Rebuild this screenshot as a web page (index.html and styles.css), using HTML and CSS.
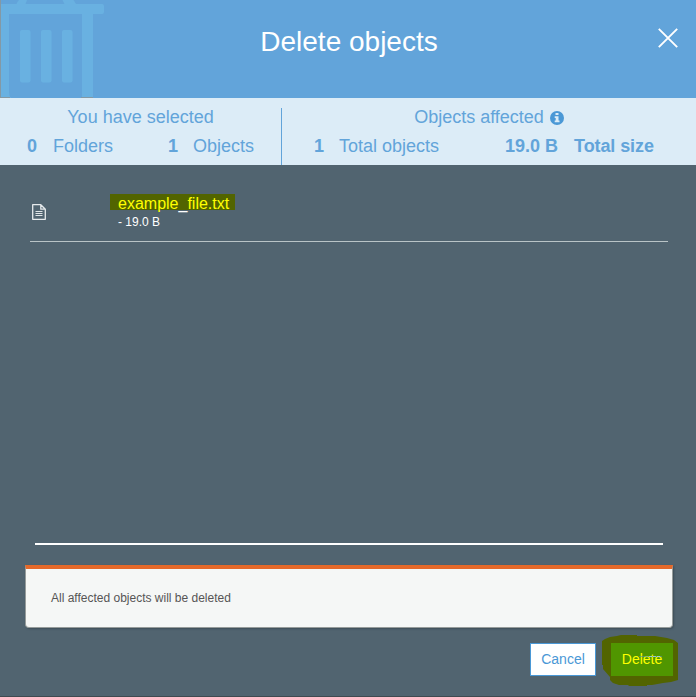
FILE: index.html
```
<!DOCTYPE html>
<html lang="en">
<head>
<meta charset="utf-8">
<title>Delete objects</title>
<link rel="stylesheet" href="styles.css">
</head>
<body>
<main class="dialog">
  <header class="header">
    <svg class="trash" width="110" height="98" viewBox="0 0 110 98" aria-hidden="true">
      <path fill="#69b1e1" d="M19 0H27L25.500 4H64.500L62.500 0H73.500L76 4H102Q104 4 104 6V12Q104 14 102 14H93V98H82V14H9V92Q9 96 11 98H0V4H16.500Q17 2 19 0Z"/>
      <g fill="#69b1e1"><rect x="20" y="30" width="10.500" height="52.500" rx="2"/><rect x="41" y="30" width="10.500" height="52.500" rx="2"/><rect x="62" y="30" width="10.500" height="52.500" rx="2"/></g>
      <path fill="#8399a5" d="M0 0H1V98H0ZM1 97H10V98H1ZM81 97H93V98H81Z"/>
    </svg>
    <h1 class="title">Delete objects</h1>
    <svg class="close" width="20" height="20" viewBox="0 0 20 20" role="img" aria-label="Close"><path d="M.8.800 19.200 19.200M19.200.800.800 19.200" stroke="#fff" stroke-width="1.900"/></svg>
  </header>
  <section class="summary">
    <div class="group selected">
      <h2 class="group-title">You have selected</h2>
      <div class="stats"><b class="count">0</b><span>Folders</span><b class="count second">1</b><span>Objects</span></div>
    </div>
    <div class="group affected">
      <h2 class="group-title">Objects affected
        <svg class="info" width="14" height="14" viewBox="0 0 14 14" aria-hidden="true"><circle cx="7" cy="7" r="7" fill="#4a98d6"/><path fill="#dcecf7" d="M5.500 2H8.500V4H5.500ZM4.700 5.200H8.500V9.600H9.500V11.300H4.700V9.600H5.700V6.900H4.700Z"/></svg>
      </h2>
      <div class="stats"><b class="count">1</b><span>Total objects</span><b class="size">19.0 B</b><b class="total">Total size</b></div>
    </div>
  </section>
  <section class="files">
    <div class="file">
      <svg class="doc" width="14" height="16" viewBox="0 0 14 16" aria-hidden="true"><path d="M.7.700H8.800L13.300 5.200V15.300H.7ZM8.800.700V5.200H13.300" fill="none" stroke="#e6eaec" stroke-width="1.300" stroke-linejoin="round"/><path d="M3.500 7.500H10.500M3.500 9.500H10.500M3.500 11.500H10.500" stroke="#e0e5e7" stroke-width="1.100"/></svg>
      <div class="details">
        <div class="name">example<span class="plain">_</span>file.txt</div>
        <div class="bytes">- 19.0 B</div>
      </div>
    </div>
  </section>
  <p class="notice">All affected objects will be deleted</p>
  <footer class="actions">
    <button class="button cancel"><span class="text">Cancel</span></button>
    <button class="button delete">
      <svg class="marker" width="78" height="54" viewBox="0 0 78 54" aria-hidden="true"><path fill="#526400" d="M1 7 4 5 9 3 16 2 20 1H36V2H54L66 4 73 6 77 9V46L70 48 62 49 51 51H46V52H28L27 51H18L12 49 9 46V43L2 35V31H1Z"/></svg>
      <span class="label"><span class="text">Delete</span></span>
      <svg class="streak" width="24" height="3" viewBox="0 0 24 3" aria-hidden="true"><path d="M0 1.500H23" stroke="#4d94ae" stroke-width=".6"/><path d="M10 1.500H21" stroke="#a5d0ef" stroke-width=".8" stroke-dasharray="3 1"/></svg>
    </button>
  </footer>
</main>
</body>
</html>
```
FILE: styles.css
```
* { box-sizing: border-box; }
body { margin: 0; font-family: "Liberation Sans", Arial, sans-serif; }
.dialog { display: flex; flex-direction: column; width: 696px; height: 697px; background: #516470; border-bottom: 1px solid #404a50; overflow: hidden; }
.header { position: relative; flex: none; display: flex; justify-content: center; height: 98px; padding-top: 26px; background: #62a4da; }
.trash { position: absolute; left: 0; top: 0; }
.title { margin: 0 0 0 2px; font-size: 28px; line-height: 32px; font-weight: 400; color: #fff; }
.close { position: absolute; right: 18px; top: 28px; }
.summary { flex: none; display: flex; height: 67px; padding-top: 10px; background: #dcecf7; color: #62a4da; font-size: 18px; line-height: 18px; }
.group { height: 57px; }
.selected { width: 282px; border-right: 1px solid #62a4da; }
.affected { flex: 1; }
.group-title { height: 18px; margin: 0 0 11px; font-size: 18px; line-height: 18px; font-weight: 400; text-align: center; }
.info { margin-left: 1px; vertical-align: -2px; }
.stats { display: flex; white-space: nowrap; }
.selected .stats { padding-left: 27px; }
.affected .stats { padding-left: 32px; }
.count { width: 26px; }
.affected .count { width: 25px; }
.second { width: 25px; margin-left: 55px; }
.size { margin: 0 16px 0 66px; }
.total { letter-spacing: -.1px; }
.files { flex: none; height: 380px; margin: 0 33px 0 35px; padding-top: 25px; border-bottom: 2px solid #fff; }
.file { display: flex; height: 52px; margin: 0 -5px; border-bottom: 1px solid #b9c4c7; }
.doc { margin: 14px 64px 0 2px; }
.details { padding-top: 4px; color: #fff; }
.name { width: 125px; height: 16px; padding-left: 8px; background: #526400; color: #ff0; font-size: 16px; line-height: 19px; }
.plain { color: #fff; }
.bytes { padding: 5px 0 0 8px; font-size: 12px; line-height: 14px; }
.notice { flex: none; height: 63px; margin: 20px 23px 0 25px; padding: 21px 25px 0; border: 1px solid #969c9b; border-top: 4px solid #e5692a; border-radius: 0 0 4px 4px; background: #f5f7f6; color: #555; font-size: 12px; line-height: 16px; box-shadow: 1px 1px 2px #3e4e58; }
.actions { display: flex; justify-content: flex-end; gap: 15px; padding: 15px 23px 0 0; }
.button { position: relative; height: 33px; padding: 0; font: 14px/16px "Liberation Sans", Arial, sans-serif; }
.text { display: block; padding-bottom: 2px; }
.cancel { width: 66px; border: 1px solid #4a98d6; background: #fff; color: #4a98d6; }
.delete { width: 62px; border: 0; background: #509600; color: #ff0; isolation: isolate; }
.marker { position: absolute; left: -10px; top: -9px; z-index: -1; }
.label { display: flex; align-items: center; justify-content: center; width: 62px; height: 33px; background: #509600; }
.streak { position: absolute; left: 28px; top: 12px; }
```
